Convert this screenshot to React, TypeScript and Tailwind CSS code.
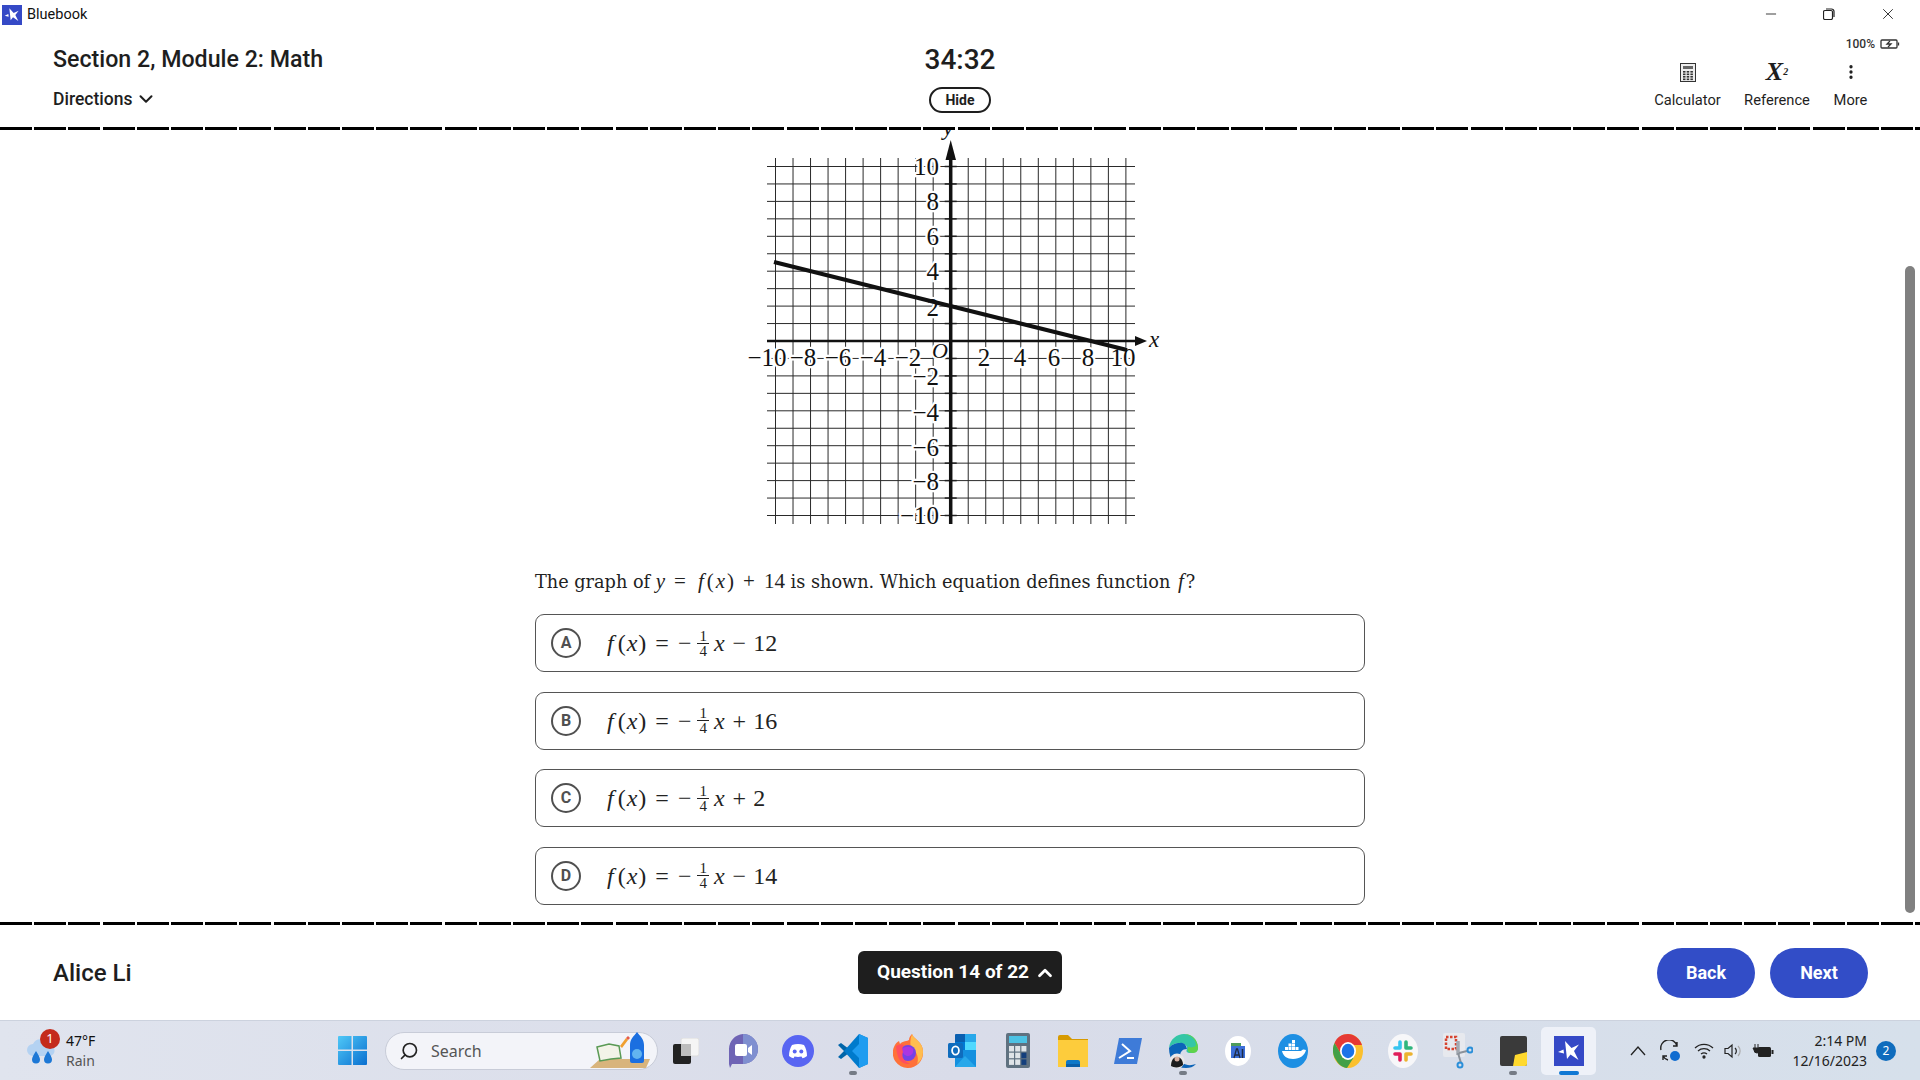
import React from "react";
import { ChevronDown, ChevronUp, EllipsisVertical, Search, Minus, X } from "lucide-react";

const Star = ({ s = 20 }: { s?: number }) => (
  <svg width={s} height={s} viewBox="0 0 30 30">
    <rect width="30" height="30" fill="#3549c6" />
    <path d="M11 5 L17.500 12 L25 8.500 L20 15 L24.500 24 L16.500 18.500 L13 23 Z" fill="#fff" />
    <path d="M4 16 L9.500 13.500 L10 17.500 Z" fill="#fff" />
  </svg>
);

const Dash = () => (
  <div className="h-[3px] w-full shrink-0 bg-[repeating-linear-gradient(90deg,#000_0,#000_32px,transparent_32px,transparent_34.2px)]" />
);

const Graph = () => {
  const ox = 950.7, oy = 341, u = 17.52, uy = 17.45;
  const r = Array.from({ length: 21 }, (_, i) => i - 10);
  const yl: [string, number][] = [["10", 167], ["8", 202], ["6", 237], ["4", 272], ["2", 308], ["−2", 377], ["−4", 413], ["−6", 448], ["−8", 482], ["−10", 516]];
  const xl: [string, number][] = [["−10", 767], ["−8", 803], ["−6", 838], ["−4", 873], ["−2", 908], ["2", 984], ["4", 1020], ["6", 1054], ["8", 1088], ["10", 1123]];
  return (
    <svg width="440" height="400" viewBox="730 130 440 400" className="shrink-0">
      {r.map((i) => (
        <g key={i}>
          <line x1={ox + i * u} x2={ox + i * u} y1="158" y2="524" stroke="#2a2a2a" strokeWidth="1" />
          <line y1={oy - i * uy} y2={oy - i * uy} x1="767" x2="1135" stroke="#2a2a2a" strokeWidth="1" />
        </g>
      ))}
      {r.map((i) => (
        <line key={i} x1={ox - 6} x2={ox + 6} y1={oy - i * uy} y2={oy - i * uy} stroke="#222" strokeWidth="1.500" />
      ))}
      <g fontFamily="'Liberation Serif',serif" fontSize="25" fill="#111" stroke="#fff" strokeWidth="4.500" paintOrder="stroke">
        {yl.map(([t, y]) => (
          <text key={t} x="939" y={y + 8} textAnchor="end">{t}</text>
        ))}
        {xl.map(([t, x]) => (
          <text key={t} x={x} y="366" textAnchor="middle">{t}</text>
        ))}
        <text x="932" y="358" fontStyle="italic" fontSize="22">O</text>
      </g>
      <line x1="767" x2="1140" y1={oy} y2={oy} stroke="#111" strokeWidth="2.500" />
      <line x1={ox} x2={ox} y1="524" y2="150" stroke="#111" strokeWidth="3.500" />
      <path d="M1147 341 L1135 336 L1135 346 Z" fill="#111" />
      <path d="M950.700 140 L945.500 160 L956 160 Z" fill="#111" />
      <line x1="774" y1="262" x2="1127" y2="350" stroke="#111" strokeWidth="4" />
      <g fontFamily="'Liberation Serif',serif" fontStyle="italic" fontSize="23" fill="#111">
        <text x="1149" y="347">x</text>
        <text x="943" y="135">y</text>
      </g>
    </svg>
  );
};

const I = ({ children, cls = "" }: { children: React.ReactNode; cls?: string }) => <i className={`italic ${cls}`}>{children}</i>;

const Frac = () => (
  <span className="ml-[6px] mr-[5px] inline-flex flex-col items-center text-[15px] leading-[14px]">
    <span className="border-b border-[#222] px-[2px]">1</span>
    <span>4</span>
  </span>
);

const Eq = ({ sign, n }: { sign: string; n: string }) => (
  <span className="flex items-center font-['Liberation_Serif',serif] text-[24px] text-[#222]">
    <I cls="mr-[4px]">f</I>
    <span>(</span>
    <I cls="mx-[1px]">x</I>
    <span>)</span>
    <span className="ml-[9px]">=</span>
    <span className="ml-[9px]">−</span>
    <Frac />
    <I cls="mr-[1px]">x</I>
    <span className="ml-[7px]">{sign}</span>
    <span className="ml-[7px]">{n}</span>
  </span>
);

const Option = ({ l, sign, n }: { l: string; sign: string; n: string }) => (
  <div className="flex h-[58px] w-[830px] items-center rounded-[9px] border border-[#555] bg-white">
    <span className="ml-[15px] flex h-[30px] w-[30px] items-center justify-center rounded-full border-2 border-[#505050] text-[16px] font-bold text-[#505050]">
      {l}
    </span>
    <span className="ml-[26px]">
      <Eq sign={sign} n={n} />
    </span>
  </div>
);

const Tool = ({ icon, label, cls }: { icon: React.ReactNode; label: string; cls: string }) => (
  <div className={`flex flex-col items-center ${cls}`}>
    <div className="flex h-[24px] items-center justify-center">{icon}</div>
    <span className="mt-[6px] text-[14.7px] leading-[20px] text-[#1e1e1e]">{label}</span>
  </div>
);

const Cell = ({ children, dot, cls = "" }: { children: React.ReactNode; dot?: boolean; cls?: string }) => (
  <div className={`relative flex h-[48px] w-[55.07px] shrink-0 items-center justify-center ${cls}`}>
    {children}
    {dot && <span className="absolute bottom-[0px] h-[4px] w-[8px] rounded-full bg-[#757b85]" />}
  </div>
);

const Teams = () => (
  <svg width="30" height="34" viewBox="0 0 30 34">
    <path d="M15 0a15 15 0 0 1 0 30H4l-2 4-1-4V15A15 15 0 0 1 15 0Z" fill="#6f64b5" />
    <path d="M15 0a15 15 0 0 1 0 30V0Z" fill="#7f8fd0" />
    <rect x="7" y="10" width="12" height="12" rx="2" fill="#fff" />
    <path d="M20 14l4-3v10l-4-3Z" fill="#fff" />
  </svg>
);
const Discord = () => (
  <svg width="32" height="32" viewBox="0 0 32 32">
    <circle cx="16" cy="16" r="16" fill="#5865f2" />
    <path d="M10 10c4-1.500 8-1.500 12 0 2 3 3 7 3 11-1.500 1.200-3 2-4.500 2.300l-1-1.800c-2.400.6-4.600.6-7 0l-1 1.800C10 23 8.500 22.200 7 21c0-4 1-8 3-11Z" fill="#fff" />
    <circle cx="12.700" cy="16.500" r="2" fill="#5865f2" />
    <circle cx="19.300" cy="16.500" r="2" fill="#5865f2" />
  </svg>
);
const VSCode = () => (
  <svg width="30" height="34" viewBox="0 0 30 34">
    <path d="M0 11l3-2 8 6 2 2-2 2-8 6-3-2 6-6Z" fill="#0065a9" />
    <path d="M21 0l9 4v26l-9 4-15-17Z" fill="#007acc" />
    <path d="M21 0l9 4v26l-9 4V24l-7-7 7-7Z" fill="#1f9cf0" />
  </svg>
);
const Firefox = () => (
  <svg width="30" height="34" viewBox="0 0 30 34">
    <path d="M15 34A15 15 0 0 1 1 13c1-3 3-5 5-6l1 3c2-3 8-3 9-4 0-2 1-4 3-6 1 3 3 4 6 7 3 3 5 6 5 11a15 15 0 0 1-15 16Z" fill="#ff7139" />
    <path d="M19 0c1 3 3 4 6 7 3 3 5 6 5 11 0 5-2 9-6 12 2-4 1-13-6-15-1-5-1-10 1-15Z" fill="#ffbd4f" />
    <circle cx="15" cy="19" r="8" fill="#7542e5" />
    <path d="M9 15c3-3 9-3 11 0 1 3-1 7-5 7-3 0-5-2-6-7Z" fill="#b833e1" opacity=".8" />
    <path d="M3 12c2-1 6-2 8-1-2 2-2 4-1 7-2 5 1 9 7 12-8 1-13-4-14-18Z" fill="#ff4f5e" />
  </svg>
);
const Outlook = () => (
  <svg width="30" height="33" viewBox="0 0 30 33">
    <rect x="7" y="0" width="21" height="31" rx="1" fill="#0a5fb0" />
    <rect x="17" y="0" width="11" height="8" fill="#28a8ea" />
    <rect x="7" y="8" width="10" height="8" fill="#0078d4" />
    <rect x="17" y="8" width="11" height="8" fill="#50d9ff" />
    <path d="M7 16l21 0v17H7Z" fill="#1490df" />
    <path d="M7 33l10-11 11 11Z" fill="#28a8ea" />
    <rect x="0" y="9" width="15" height="15" rx="1.500" fill="#0f6cbd" />
    <ellipse cx="7.500" cy="16.500" rx="3.400" ry="4.200" fill="none" stroke="#fff" strokeWidth="1.800" />
  </svg>
);
const Calc = () => (
  <svg width="24" height="35" viewBox="0 0 24 35">
    <rect width="24" height="35" rx="2" fill="#5f7180" />
    <rect x="3" y="3" width="18" height="7" fill="#4cc2e4" />
    {[0, 1, 2].map((r) =>
      [0, 1, 2].map((c) => (
        <rect key={`${r}${c}`} x={3 + c * 6.200} y={13 + r * 6.700} width="5" height="5.500" fill={c === 2 && r > 0 ? "#143f7c" : "#dfe4e8"} />
      ))
    )}
  </svg>
);
const Folder = () => (
  <svg width="30" height="32" viewBox="0 0 30 32">
    <path d="M0 2a2 2 0 0 1 2-2h8l4 4h16v28H0Z" fill="#d79a00" />
    <rect x="0" y="5" width="30" height="27" fill="#ffd44d" />
    <path d="M0 5h30v27H0Z" fill="#fcc934" opacity=".7" />
    <path d="M8 32v-5a2 2 0 0 1 2-2h10a2 2 0 0 1 2 2v5Z" fill="#0e78c8" />
    <rect x="8" y="29" width="14" height="3" fill="#0a5fa8" />
  </svg>
);
const PS = () => (
  <svg width="28" height="26" viewBox="0 0 28 26">
    <path d="M5 0h23l-5 26H0Z" fill="#3e7bd8" />
    <path d="M8 6l8 7-11 7" fill="none" stroke="#fff" strokeWidth="2" />
    <path d="M13 20h7" stroke="#fff" strokeWidth="2" />
  </svg>
);
const Edge = () => (
  <svg width="30" height="34" viewBox="0 0 30 34">
    <path d="M1 14C2 5 9 0 16 0c8 0 14 6 14 14 0 3-3 5-7 5-5 0-5-2-4-4 1-3-3-6-7-6-5 0-9 2-11 5Z" fill="#34c6a6" />
    <path d="M30 14c0-8-6-14-14-14 6 1 11 4 12 10 0 2-1 3-3 3-2 1-3 0-5 0-1 3 0 6 5 6 4 0 5-3 5-5Z" fill="#5fd34a" />
    <path d="M1 14c0 12 7 20 17 20 4 0 7-1 10-4-8 3-16 0-16-7 0-5 2-8 7-8-1-5-4-7-7-6-5 0-9 2-11 5Z" fill="#0c64b8" />
    <circle cx="9" cy="27" r="7.500" fill="#e8e8e8" />
    <path d="M3 32c0-5 2-9 6-9s6 4 6 8c-3 3-9 3-12 1Z" fill="#1c1c1c" />
    <circle cx="9" cy="25" r="2.500" fill="#d6b0a0" />
  </svg>
);
const AI = () => (
  <svg width="26" height="30" viewBox="0 0 26 30">
    <ellipse cx="13" cy="15" rx="13" ry="15" fill="#fff" />
    <rect x="6" y="7" width="10" height="5" fill="#4e9b5c" />
    <rect x="6" y="10" width="14" height="12" fill="#3c6fd8" />
    <path d="M9 22l2.500-9h1l2.500 9M10 19h4" stroke="#1e2b45" strokeWidth="1.300" fill="none" />
    <path d="M17.500 13v9" stroke="#1e2b45" strokeWidth="1.500" />
  </svg>
);
const Docker = () => (
  <svg width="30" height="34" viewBox="0 0 30 34">
    <ellipse cx="15" cy="17" rx="15" ry="17" fill="#1d8fe3" />
    <path d="M4 17h19c1-1.500 3-2 5-1-1 5-6 9-13 9-6 0-10-3-11-8Z" fill="#fff" />
    <g fill="#fff">
      <rect x="7" y="13" width="3" height="3" /><rect x="10.500" y="13" width="3" height="3" /><rect x="14" y="13" width="3" height="3" /><rect x="17.500" y="13" width="3" height="3" />
      <rect x="10.500" y="9.500" width="3" height="3" /><rect x="14" y="9.500" width="3" height="3" /><rect x="14" y="6" width="3" height="3" />
    </g>
  </svg>
);
const Chrome = () => (
  <svg width="30" height="34" viewBox="0 0 30 34">
    <ellipse cx="15" cy="17" rx="15" ry="17" fill="#fbc02d" />
    <path d="M15 0C9 0 4 3 1.500 9L8 20l7-9h14C26.500 4 21 0 15 0Z" fill="#e53935" />
    <path d="M1.500 9C-1 14-.5 21 2.500 25 5 30 9 33.500 14 34l7-11-6 1-7-4Z" fill="#43a047" />
    <ellipse cx="15" cy="17" rx="8" ry="9" fill="#fff" />
    <ellipse cx="15" cy="17" rx="6.300" ry="7.200" fill="#1a73e8" />
  </svg>
);
const Slack = () => (
  <svg width="30" height="34" viewBox="0 0 30 34">
    <ellipse cx="15" cy="17" rx="15" ry="17" fill="#f7f7f9" />
    <g strokeWidth="3.600" strokeLinecap="round" fill="none">
      <path d="M12 8v6M7 14h5" stroke="#36c5f0" />
      <path d="M18 8v6M23 14h-5" stroke="#2eb67d" />
      <path d="M18 26v-6M23 20h-5" stroke="#ecb22e" />
      <path d="M12 26v-6M7 20h5" stroke="#e01e5a" />
    </g>
  </svg>
);
const Snip = () => (
  <svg width="30" height="36" viewBox="0 0 30 36">
    <rect x="0" y="0" width="22" height="24" rx="2" fill="#e7e9ee" />
    <rect x="3" y="4" width="10" height="12" fill="none" stroke="#d6432f" strokeWidth="2.500" strokeDasharray="2.500 1.500" />
    <path d="M15 8v14" stroke="#a2a8b0" strokeWidth="3.500" />
    <path d="M15 20l3 10M16 20l8-2" stroke="#8b929b" strokeWidth="2" />
    <circle cx="17" cy="32" r="2.500" fill="none" stroke="#2a8fd9" strokeWidth="2" />
    <circle cx="27" cy="17" r="2.500" fill="none" stroke="#2a8fd9" strokeWidth="2" />
  </svg>
);
const Sticky = () => (
  <svg width="27" height="30" viewBox="0 0 27 30">
    <rect width="27" height="30" rx="2" fill="#3a3a3a" />
    <path d="M13 30l2-11 12-3v12a2 2 0 0 1-2 2Z" fill="#ffd92e" />
  </svg>
);

export default function App() {
  return (
    <div className="flex h-[1080px] w-[1920px] flex-col overflow-hidden bg-white font-['Roboto',sans-serif] text-[#1e1e1e]">
      <div className="relative flex h-[30px] shrink-0 items-center pl-[2px]">
        <Star />
        <span className="ml-[5px] text-[14.5px] text-[#111]">Bluebook</span>
        <div className="ml-auto flex items-center pr-[19px] pb-[2px] text-[#222]">
          <Minus size={16} strokeWidth={1.3} className="mr-[44px]" />
          <svg width="12" height="12" viewBox="0 0 12 12" className="mr-[44px]" fill="none" stroke="#222" strokeWidth="1.200">
            <rect x=".5" y="2.500" width="9" height="9" rx="1.500" />
            <path d="M3 1h5.500A2.500 2.500 0 0 1 11 3.500V9" />
          </svg>
          <X size={18} strokeWidth={1.2} className="mr-[4px]" />
        </div>
      </div>

      <header className="grid h-[97px] shrink-0 grid-cols-3">
        <div className="flex flex-col pl-[53px]">
          <h1 className="mt-[14px] text-[23.2px] leading-[30px] font-medium text-[#1e1e1e]">Section 2, Module 2: Math</h1>
          <div className="mt-[13px] flex items-center gap-[3px] text-[17.5px] leading-[24px] font-medium">
            Directions
            <ChevronDown size={22} strokeWidth={2.2} />
          </div>
        </div>
        <div className="flex flex-col items-center">
          <div className="mt-[14px] text-[28px] leading-[32px] font-medium">34:32</div>
          <div className="mt-[11px] flex h-[26px] w-[62px] items-center justify-center rounded-full border-2 border-[#1e1e1e] text-[14px] font-bold">Hide</div>
        </div>
        <div className="flex flex-col items-end">
          <div className="flex items-center pt-[6px] pr-[20px] text-[12px] leading-[16px] font-medium text-[#333]">
            100%
            <svg width="20" height="10" viewBox="0 0 20 10" className="ml-[5px]" fill="none" stroke="#333" strokeWidth="1.300">
              <rect x="1" y="1" width="16" height="8" rx="1" />
              <path d="M18.500 3.500v3" />
              <path d="M10 2L7 5h4L8 8" />
            </svg>
          </div>
          <div className="mt-[8px] flex items-start pr-[52px]">
            <Tool
              label="Calculator"
              cls="w-[69px]"
              icon={
                <svg width="16" height="19" viewBox="0 0 16 19" fill="none" stroke="#333">
                  <rect x=".5" y=".5" width="15" height="18" fill="#eee" />
                  <rect x="3" y="3" width="10" height="3" fill="#666" stroke="none" />
                  <g fill="#333" stroke="none">
                    {[0, 1, 2, 3].map((r) => [0, 1, 2].map((c) => <rect key={`${r}${c}`} x={3 + c * 3.700} y={8 + r * 2.500} width="2.500" height="1.600" />))}
                  </g>
                </svg>
              }
            />
            <Tool
              label="Reference"
              cls="ml-[21px] w-[68px]"
              icon={
                <span className="font-['Liberation_Serif',serif] text-[26px] leading-[24px] font-bold text-[#1e1e1e] italic">
                  X<sup className="text-[10px]">2</sup>
                </span>
              }
            />
            <Tool label="More" cls="ml-[22px] w-[35px]" icon={<EllipsisVertical size={18} strokeWidth={2.4} />} />
          </div>
        </div>
      </header>
      <Dash />

      <main className="relative flex min-h-0 flex-1 flex-col items-center pr-[20px]">
        <Graph />
        <p className="mt-[36px] w-[830px] font-['DejaVu_Serif',serif] text-[17.7px] leading-[30px] text-[#222]">
          The graph of{" "}
          <span className="font-['Liberation_Serif',serif] text-[21px]">
            <I>y</I>
            <span className="mx-[9px]">=</span>
            <I cls="mx-[3px]">f</I>(<I cls="mx-[2px]">x</I>)<span className="mx-[9px]">+</span>14
          </span>{" "}
          is shown. Which equation defines function{" "}
          <span className="font-['Liberation_Serif',serif] text-[21px]"><I cls="mx-[2px]">f</I></span>?
        </p>
        <div className="mt-[17px] flex flex-col gap-[19.5px]">
          <Option l="A" sign="−" n="12" />
          <Option l="B" sign="+" n="16" />
          <Option l="C" sign="+" n="2" />
          <Option l="D" sign="−" n="14" />
        </div>
        <div className="absolute top-[136px] right-[5px] h-[647px] w-[10px] rounded-full bg-[#808080]" />
      </main>

      <Dash />
      <footer className="grid h-[95px] shrink-0 grid-cols-3 items-center">
        <div className="pl-[53px] text-[24px] font-medium text-[#1e1e1e]">Alice Li</div>
        <div className="flex justify-center">
          <div className="flex h-[43px] w-[204px] items-center justify-center gap-[5px] rounded-[6px] bg-[#1e1e1e] pl-[13px] text-[19px] font-bold text-white">
            Question 14 of 22
            <ChevronUp size={22} strokeWidth={3} />
          </div>
        </div>
        <div className="flex justify-end gap-[15px] pr-[52px]">
          <div className="flex h-[50px] w-[98px] items-center justify-center rounded-full bg-[#324dc7] text-[18px] font-bold text-white">Back</div>
          <div className="flex h-[50px] w-[98px] items-center justify-center rounded-full bg-[#324dc7] text-[18px] font-bold text-white">Next</div>
        </div>
      </footer>

      <div className="flex h-[60px] shrink-0 items-center border-t border-[#ccd2de] bg-[linear-gradient(90deg,#e0e4ee,#d9dce9_50%,#d6e0eb)] font-['Noto_Sans',sans-serif]">
        <div className="flex w-[338px] shrink-0 items-center pl-[25px]">
          <div className="relative h-[36px] w-[32px]">
            <svg width="32" height="30" viewBox="0 0 32 30" className="absolute top-[4px] left-0">
              <path d="M8 19a6 6 0 0 1 0-12 8 8 0 0 1 15 1 5.500 5.500 0 0 1 2 11Z" fill="#b4d2f2" />
              <path d="M11 14c-2.500 4-4 6.500-4 8.500a4 4 0 0 0 8 0c0-2-1.500-4.500-4-8.500ZM23 14c-2.500 4-4 6.500-4 8.500a4 4 0 0 0 8 0c0-2-1.500-4.500-4-8.500Z" fill="#1d78d6" />
            </svg>
            <span className="absolute top-[-4px] left-[15px] flex h-[20px] w-[20px] items-center justify-center rounded-full bg-[#c42b1c] text-[13px] leading-none text-white">1</span>
          </div>
          <div className="ml-[9px] flex flex-col text-[14px] leading-[20px]">
            <span className="text-[#111]">47°F</span>
            <span className="text-[#555]">Rain</span>
          </div>
        </div>
        <svg width="29" height="29" viewBox="0 0 29 29" className="shrink-0">
          <defs>
            <linearGradient id="w" x1="0" y1="0" x2="1" y2="1">
              <stop offset="0" stopColor="#4fc8f7" />
              <stop offset="1" stopColor="#0a6fd0" />
            </linearGradient>
          </defs>
          <path d="M0 1a1 1 0 0 1 1-1h12.500v13.500H0ZM15 0h13a1 1 0 0 1 1 1v12.500H15ZM0 15h13.500v14H1a1 1 0 0 1-1-1ZM15 15h14v13a1 1 0 0 1-1 1H15Z" fill="url(#w)" />
        </svg>
        <div className="relative ml-[18px] flex h-[38px] w-[273px] shrink-0 items-center rounded-full border border-[#c8ccd8] bg-[#f3f4f9] pl-[13px] text-[16px] text-[#555]">
          <Search size={20} strokeWidth={2} className="-scale-x-100 text-[#222]" />
          <span className="ml-[12px]">Search</span>
          <svg width="66" height="38" viewBox="0 0 66 38" className="absolute right-[5px] bottom-0">
            <path d="M4 37l10-9h50l-4 9Z" fill="#d8b47c" />
            <path d="M11 16l12-3 10 2 2 12-10 1-11 2Z" fill="#f3f3e8" stroke="#5a9a55" strokeWidth="1.500" />
            <path d="M34 15l6-8 2 2-6 8Z" fill="#f0a030" />
            <path d="M40 7l2-2 2 2-2 2Z" fill="#e65a4a" />
            <path d="M44 30V14c0-6 4-9 7-13 3 4 7 7 7 13v16a2 2 0 0 1-2 2H46a2 2 0 0 1-2-2Z" fill="#1b6fe0" />
            <ellipse cx="51" cy="23" rx="5" ry="5" fill="#62b4f0" />
          </svg>
        </div>
        <Cell>
          <svg width="26" height="26" viewBox="0 0 26 26">
            <rect x="8" y="0" width="18" height="18" rx="2" fill="#f5f5f5" stroke="#dcdcdc" />
            <rect x="0" y="6" width="18" height="20" rx="2" fill="#222" />
            <rect x="8" y="6" width="10" height="12" fill="#bdbdbd" />
          </svg>
        </Cell>
        <Cell cls="ml-[2px]"><Teams /></Cell>
        <Cell><Discord /></Cell>
        <Cell dot><VSCode /></Cell>
        <Cell><Firefox /></Cell>
        <Cell><Outlook /></Cell>
        <Cell><Calc /></Cell>
        <Cell><Folder /></Cell>
        <Cell><PS /></Cell>
        <Cell dot><Edge /></Cell>
        <Cell><AI /></Cell>
        <Cell><Docker /></Cell>
        <Cell><Chrome /></Cell>
        <Cell><Slack /></Cell>
        <Cell><Snip /></Cell>
        <Cell dot><Sticky /></Cell>
        <Cell cls="rounded-[5px] bg-[#eef1f8]">
          <Star s={30} />
          <span className="absolute bottom-[0px] h-[4px] w-[20px] rounded-full bg-[#0f78d4]" />
        </Cell>
        <div className="ml-auto flex items-center pr-[24px]">
          <svg width="16" height="10" viewBox="0 0 16 10" fill="none" stroke="#222" strokeWidth="1.300" className="mr-[13px]"><path d="M1 9l7-8 7 8" /></svg>
          <svg width="22" height="22" viewBox="0 0 22 22" fill="none" stroke="#222" strokeWidth="1.400" className="mr-[13px]">
            <path d="M2 10A8 8 0 0 1 18 6M18 2v4h-4M4 20v-4h4M4 16a8 8 0 0 0 5 4" />
            <circle cx="16" cy="16" r="5" fill="#0f6cd0" stroke="none" />
          </svg>
          <svg width="20" height="16" viewBox="0 0 20 16" fill="none" stroke="#222" strokeWidth="1.300" className="mr-[10px]">
            <path d="M1 5a13 13 0 0 1 18 0M4 8a9 9 0 0 1 12 0M7 11a5 5 0 0 1 6 0" />
            <circle cx="10" cy="14" r="1" fill="#222" />
          </svg>
          <svg width="20" height="16" viewBox="0 0 20 16" fill="none" stroke="#222" strokeWidth="1.200" className="mr-[8px]">
            <path d="M1 5.500h3L8 2v12l-4-3.500H1Z" />
            <path d="M11 5a4 4 0 0 1 0 6" />
            <path d="M14 3a7 7 0 0 1 0 10" stroke="#aaa" />
          </svg>
          <svg width="22" height="16" viewBox="0 0 22 16" className="mr-[19px]">
            <rect x="6" y="4" width="13" height="10" rx="1.500" fill="#222" />
            <rect x="19.500" y="7" width="2" height="4" fill="#222" />
            <path d="M3 1v4M6 1v4M1 5h7v2a3 3 0 0 1-6 0Z" stroke="#222" fill="#222" strokeWidth="1" />
          </svg>
          <div className="flex flex-col items-end text-[14px] leading-[20px] text-[#222]">
            <span>2:14 PM</span>
            <span>12/16/2023</span>
          </div>
          <span className="ml-[9px] flex h-[20px] w-[20px] items-center justify-center rounded-full bg-[#0f6cbd] text-[12px] text-white">2</span>
        </div>
      </div>
    </div>
  );
}
